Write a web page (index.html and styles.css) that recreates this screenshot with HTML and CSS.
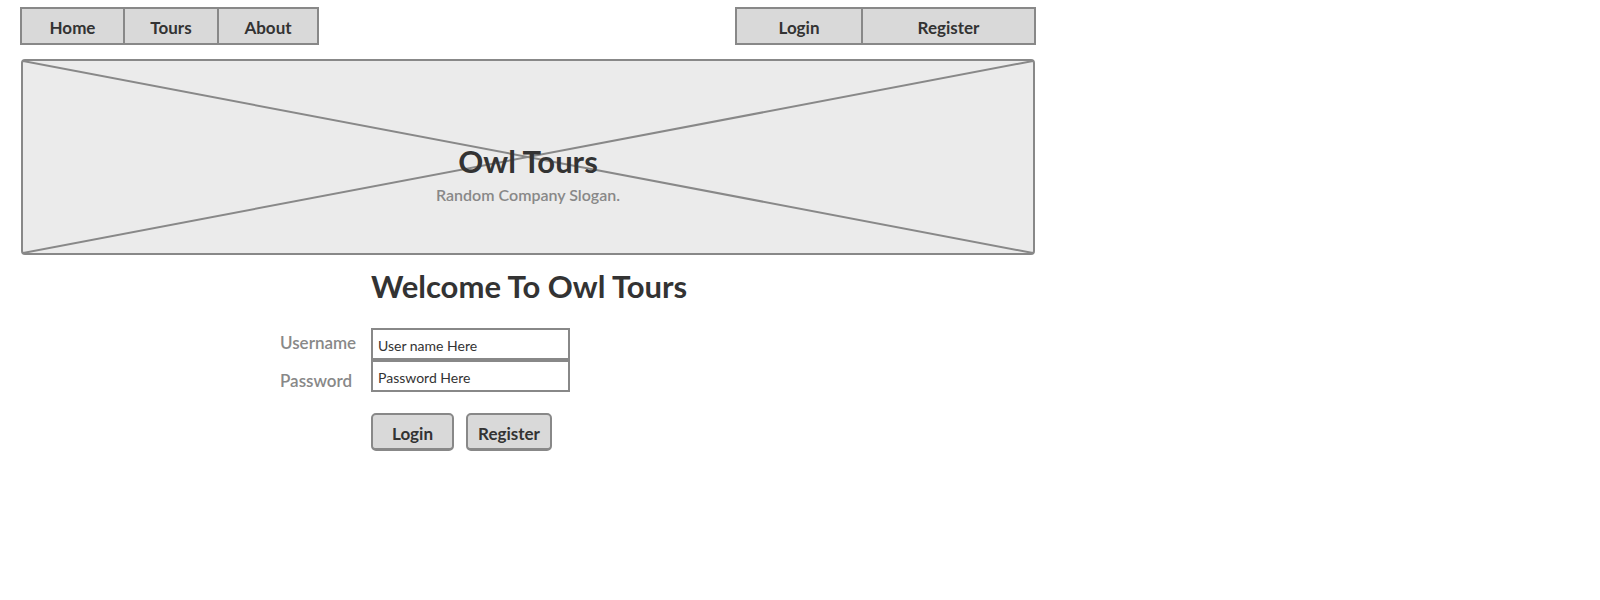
FILE: index.html
```html
<!DOCTYPE html>
<html>
<head>
<meta charset="utf-8">
<title>Owl Tours</title>
<link rel="stylesheet" href="styles.css">
</head>
<body>
<div class="page">
  <div class="topbar">
    <nav class="nav">
      <a class="nav-item nav-home">Home</a>
      <a class="nav-item nav-tours">Tours</a>
      <a class="nav-item nav-about">About</a>
    </nav>
    <nav class="nav">
      <a class="nav-item nav-login">Login</a>
      <a class="nav-item nav-register">Register</a>
    </nav>
  </div>

  <header class="banner">
    <svg class="banner-x" viewBox="0 0 100 100" preserveAspectRatio="none">
      <line x1="0" y1="0" x2="100" y2="100" vector-effect="non-scaling-stroke"/>
      <line x1="100" y1="0" x2="0" y2="100" vector-effect="non-scaling-stroke"/>
    </svg>
    <h1 class="banner-title">Owl Tours</h1>
    <p class="banner-slogan">Random Company Slogan.</p>
  </header>

  <main class="main">
    <h2 class="welcome">Welcome To Owl Tours</h2>
    <form class="login-form">
      <label class="field-label">Username</label>
      <div class="field-input">User name Here</div>
      <label class="field-label field-label-low">Password</label>
      <div class="field-input">Password Here</div>
      <div class="buttons">
        <button type="button" class="btn btn-login">Login</button>
        <button type="button" class="btn btn-register">Register</button>
      </div>
    </form>
  </main>
</div>
</body>
</html>
```

FILE: styles.css
```css
* { box-sizing: border-box; }

body {
  margin: 0;
  background: #ffffff;
  font-family: Lato, "Open Sans", "Liberation Sans", sans-serif;
  color: #333333;
}

.page {
  width: 1036px;
  padding: 7px 0 0 20px;
}

.topbar {
  display: flex;
  justify-content: space-between;
}

.nav {
  display: flex;
  height: 38px;
  border: 2px solid #888888;
  background: #d9d9d9;
}

.nav-item {
  display: flex;
  align-items: center;
  justify-content: center;
  font-weight: 700;
  font-size: 17px;
  color: #333333;
  border-left: 2px solid #888888;
  padding-top: 2px;
}
.nav-item:first-child { border-left: none; }

.nav-home { width: 101px; }
.nav-tours { width: 94px; }
.nav-about { width: 100px; }
.nav-login { width: 124px; }
.nav-register { width: 173px; }

.banner {
  position: relative;
  margin: 14px 1px 0 1px;
  height: 196px;
  border: 2px solid #888888;
  border-radius: 4px;
  background: #ebebeb;
  display: flex;
  flex-direction: column;
  align-items: center;
  padding-top: 82px;
}

.banner-x {
  position: absolute;
  left: 0;
  top: 0;
  width: 100%;
  height: 100%;
}
.banner-x line {
  stroke: #888888;
  stroke-width: 2px;
}

.banner-title {
  position: relative;
  margin: 0;
  font-size: 31px;
  line-height: 36px;
  font-weight: 700;
  color: #333333;
}

.banner-slogan {
  position: relative;
  margin: 6px 0 0 0;
  font-size: 16px;
  line-height: 20px;
  color: #888888;
  font-weight: 600;
}

.main {
  padding-top: 13px;
}

.welcome {
  margin: 0 0 0 351px;
  font-size: 31px;
  line-height: 36px;
  font-weight: 700;
  color: #333333;
}

.login-form {
  margin: 24px 0 0 260px;
  display: grid;
  grid-template-columns: 91px 199px;
  grid-template-rows: 32px 32px auto;
}

.field-label {
  font-size: 17px;
  font-weight: 600;
  color: #888888;
  align-self: center;
  margin-top: -3px;
}
.field-label-low { margin-top: 9px; }

.field-input {
  border: 2px solid #888888;
  background: #ffffff;
  font-size: 14px;
  color: #333333;
  display: flex;
  align-items: center;
  padding: 2px 0 0 5px;
}

.buttons {
  grid-column: 2;
  display: flex;
  gap: 12px;
  margin-top: 21px;
}

.btn {
  height: 38px;
  border: 2px solid #888888;
  border-bottom-width: 3px;
  border-radius: 5px;
  background: #d9d9d9;
  font-family: inherit;
  font-weight: 700;
  font-size: 17px;
  color: #333333;
  padding: 3px 0 0 0;
}
.btn-login { width: 83px; }
.btn-register { width: 86px; }
```
